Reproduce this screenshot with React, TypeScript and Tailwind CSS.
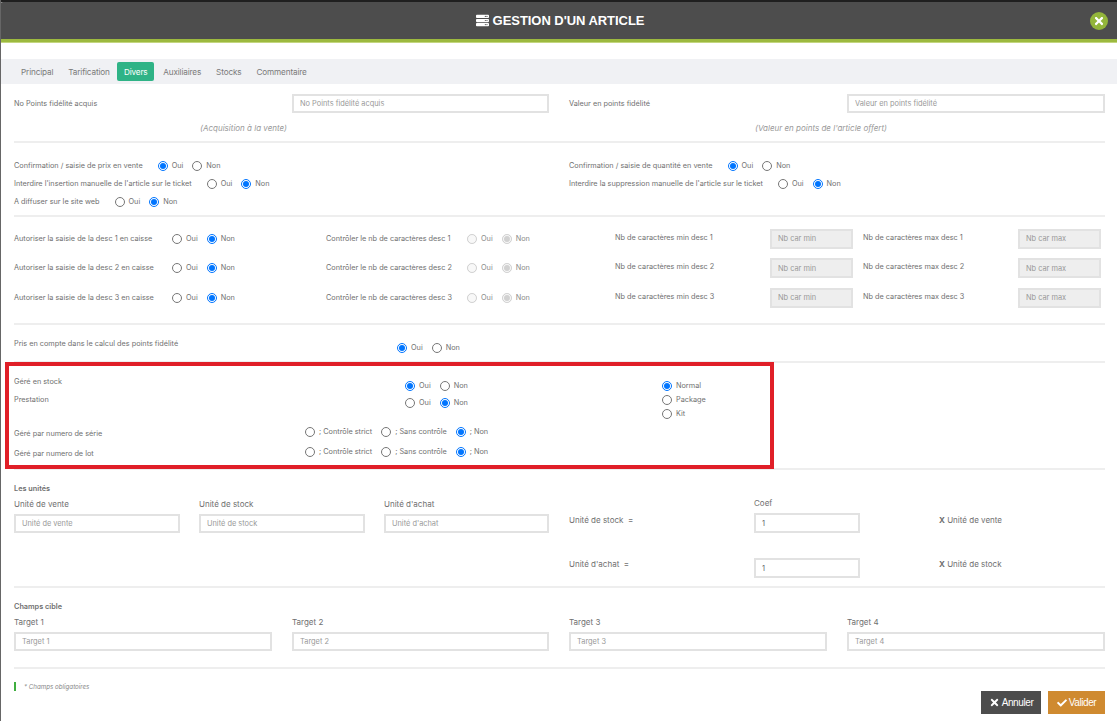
import React from "react";
import { FaServer, FaTimes, FaCheck } from "react-icons/fa";

const Radio = ({ on, off, label }: { on?: boolean; off?: boolean; label: string }) => (
  <label className={`flex items-center mr-[9px] ${off ? "text-[#8a8a8a]" : ""}`}>
    <input type="radio" readOnly checked={!!on} disabled={!!off} className="w-[10px] h-[10px] m-0 shrink-0" />
    <span className="ml-[4px] whitespace-nowrap">{label}</span>
  </label>
);

const OuiNon = ({ oui, off }: { oui?: boolean; off?: boolean }) => (
  <div className="flex items-center">
    <Radio on={oui} off={off} label="Oui" />
    <Radio on={!oui} off={off} label="Non" />
  </div>
);

const Field = ({ ph, w, value, off, h = "h-[19px]" }: { ph?: string; w: string; value?: string; off?: boolean; h?: string }) => (
  <input
    readOnly
    placeholder={ph}
    value={value ?? ""}
    disabled={off}
    className={`${w} ${h} shrink-0 border-2 border-[#e2e2e2] pl-[6px] text-[7.4px] text-[#666] outline-none placeholder:text-[#999] ${off ? "bg-[#eeeeee]" : "bg-white"}`}
  />
);

const Line = ({ label, oui }: { label: string; oui?: boolean }) => (
  <div className="flex items-center h-[18px]">
    <span className="pr-[15px] whitespace-nowrap">{label}</span>
    <OuiNon oui={oui} />
  </div>
);

const DescRow = ({ n }: { n: number }) => (
  <div className="flex items-center h-[29.5px]">
    <div className="w-[158px] whitespace-nowrap">Autoriser la saisie de la desc {n} en caisse</div>
    <div className="w-[154px]"><OuiNon /></div>
    <div className="w-[141px] whitespace-nowrap">Contrôler le nb de caractères desc {n}</div>
    <div className="w-[148px]"><OuiNon off /></div>
    <div className="w-[155px] whitespace-nowrap pb-[2px]">Nb de caractères min desc {n}</div>
    <Field ph="Nb car min" w="w-[83px]" off h="h-[20px]" />
    <div className="w-[165px] pl-[10px] whitespace-nowrap pb-[2px]">Nb de caractères max desc {n}</div>
    <Field ph="Nb car max" w="w-[83px]" off h="h-[20px]" />
  </div>
);

const TrackRow = ({ label }: { label: string }) => (
  <div className="flex items-start h-[20px]">
    <div className="w-[291px] pt-[2px] whitespace-nowrap">{label}</div>
    <div className="flex items-center">
      <Radio label="; Contrôle strict" />
      <Radio label="; Sans contrôle" />
      <Radio on label="; Non" />
    </div>
  </div>
);

const Labeled = ({ label, w }: { label: string; w: string }) => (
  <div className={w}>
    <div className="h-[10px] mb-[5px] whitespace-nowrap">{label}</div>
    <Field ph={label} w="w-full" />
  </div>
);

export default function App() {
  const tabs = ["Principal", "Tarification", "Divers", "Auxiliaires", "Stocks", "Commentaire"];
  return (
    <div className="relative w-[1117px] h-[721px] overflow-hidden bg-white border-l border-[#666] text-[7.3px] leading-[10px] text-[#707070] font-['Inter','Liberation_Sans',sans-serif]">
      <div className="h-[2px] bg-[#1f1f1f] -ml-px" />
      <header className="-ml-px h-[37px] bg-[#4d4d4d] rounded-tl-[3px] flex items-center justify-center relative">
        <div className="flex items-center gap-[4px] text-white font-['Liberation_Sans',sans-serif] font-bold text-[13px] tracking-[-0.05px] pl-[3px]">
          <FaServer className="w-[13px] h-[13px]" />
          <span>GESTION D'UN ARTICLE</span>
        </div>
        <span className="absolute right-[9px] top-[10px] w-[18px] h-[18px] rounded-full bg-[#93b53b] flex items-center justify-center text-white">
          <FaTimes className="w-[12px] h-[12px]" />
        </span>
      </header>
      <div className="-ml-px h-[3px] bg-[#9cb93f] border-b border-[#c3d67f] box-content" />

      <nav className="mt-[16px] h-[25px] bg-[#f0f1f4] -ml-px pl-[13.5px] flex items-center text-[8.2px] tracking-[-0.15px] text-[#7a7a7a]">
        {tabs.map((t) =>
          t === "Divers" ? (
            <span key={t} className="h-[19px] w-[37px] justify-center mr-[1.5px] flex items-center rounded-[2px] bg-[#2fb386] text-white">{t}</span>
          ) : (
            <span key={t} className="px-[7.5px]">{t}</span>
          )
        )}
      </nav>

      <main className="pl-[13px] pr-[12px]">
        {/* points fidélité */}
        <section className="h-[59px] pt-[10px] border-b-2 border-[#eeeeee] flex gap-[20px]">
          <div className="w-[535px]">
            <div className="flex items-center">
              <span className="w-[278px] pt-[1px]">No Points fidélité acquis</span>
              <Field ph="No Points fidélité acquis" w="w-[257px]" />
            </div>
            <div className="pl-[186px] pt-[10px] italic text-[#9a9a9a] text-[8px]">(Acquisition à la vente)</div>
          </div>
          <div className="w-[536px]">
            <div className="flex items-center">
              <span className="w-[278px] pt-[1px]">Valeur en points fidélité</span>
              <Field ph="Valeur en points fidélité" w="w-[258px]" />
            </div>
            <div className="pl-[186px] pt-[10px] italic text-[#9a9a9a] text-[8px]">(Valeur en points de l'article offert)</div>
          </div>
        </section>

        {/* confirmations */}
        <section className="h-[74px] pt-[14px] border-b-2 border-[#eeeeee] flex gap-[20px]">
          <div className="w-[535px]">
            <Line label="Confirmation / saisie de prix en vente" oui />
            <Line label="Interdire l'insertion manuelle de l'article sur le ticket" />
            <Line label="A diffuser sur le site web" />
          </div>
          <div className="w-[536px]">
            <Line label="Confirmation / saisie de quantité en vente" oui />
            <Line label="Interdire la suppression manuelle de l'article sur le ticket" />
          </div>
        </section>

        {/* descriptions */}
        <section className="h-[108px] pt-[7px] border-b-2 border-[#eeeeee]">
          <DescRow n={1} />
          <DescRow n={2} />
          <DescRow n={3} />
        </section>

        {/* points */}
        <section className="h-[38px] pt-[14px] border-b-2 border-[#eeeeee] flex items-start">
          <div className="w-[383px]">Pris en compte dans le calcul des points fidélité</div>
          <div className="pt-[4px]"><OuiNon oui /></div>
        </section>

        {/* stock */}
        <section className="h-[107px] pt-[14px] border-b-2 border-[#eeeeee] flex items-start">
          <div className="w-[648px]">
            <div className="flex items-start h-[18px]">
              <div className="w-[391px]">Géré en stock</div>
              <div className="pt-[4px]"><OuiNon oui /></div>
            </div>
            <div className="flex items-start h-[32px]">
              <div className="w-[391px]">Prestation</div>
              <div className="pt-[3px]"><OuiNon /></div>
            </div>
            <TrackRow label="Géré par numero de série" />
            <TrackRow label="Géré par numero de lot" />
          </div>
          <div className="pt-[4px]">
            <div className="h-[14px]"><Radio on label="Normal" /></div>
            <div className="h-[14px]"><Radio label="Package" /></div>
            <div className="h-[14px]"><Radio label="Kit" /></div>
          </div>
        </section>

        {/* unités */}
        <section className="h-[118px] pt-[14px] border-b-2 border-[#eeeeee] flex gap-[20px]">
          <div className="w-[535px]">
            <div className="h-[10px] mb-[5px] font-semibold">Les unités</div>
            <div className="flex gap-[19px] text-[8px]">
              <Labeled label="Unité de vente" w="w-[166px]" />
              <Labeled label="Unité de stock" w="w-[166px]" />
              <Labeled label="Unité d'achat" w="w-[165px]" />
            </div>
          </div>
          <div className="w-[536px] text-[8px] pt-[14px]">
            <div className="flex items-start h-[60px]">
              <div className="w-[185px] pt-[17px]">Unité de stock&nbsp; =</div>
              <div className="w-[185px]">
                <div className="h-[10px] mb-[5px]">Coef</div>
                <Field value="1" w="w-[106px]" h="h-[20px]" />
              </div>
              <div className="pt-[17px]"><b className="font-bold">X</b> Unité de vente</div>
            </div>
            <div className="flex items-start">
              <div className="w-[185px] pt-[1px]">Unité d'achat&nbsp; =</div>
              <div className="w-[185px]"><Field value="1" w="w-[106px]" h="h-[20px]" /></div>
              <div className="pt-[1px]"><b className="font-bold">X</b> Unité de stock</div>
            </div>
          </div>
        </section>

        {/* cibles */}
        <section className="h-[81px] pt-[14px] border-b-2 border-[#eeeeee]">
          <div className="h-[10px] mb-[5px] font-semibold">Champs cible</div>
          <div className="flex gap-[20px] text-[8px]">
            <Labeled label="Target 1" w="w-[258px]" />
            <Labeled label="Target 2" w="w-[257px]" />
            <Labeled label="Target 3" w="w-[258px]" />
            <Labeled label="Target 4" w="w-[258px]" />
          </div>
        </section>

        {/* pied */}
        <footer className="flex items-start justify-between pt-[13px]">
          <div className="flex items-center h-[9px]">
            <span className="w-[2px] h-[9px] bg-[#3fae3f]" />
            <span className="ml-[8px] italic text-[6.2px] text-[#888]">* Champs obligatoires</span>
          </div>
          <div className="flex gap-[7px] pt-[9px] text-[10px] tracking-[-0.4px] text-white font-['Liberation_Sans',sans-serif]">
            <button className="w-[60px] h-[23px] bg-[#4d4d4d] flex items-center justify-center gap-[2px]">
              <FaTimes className="w-[11px] h-[11px]" /> Annuler
            </button>
            <button className="w-[57px] h-[23px] bg-[#cf8a30] flex items-center justify-center gap-[2px]">
              <FaCheck className="w-[10px] h-[10px]" /> Valider
            </button>
          </div>
        </footer>
      </main>

      <div className="absolute left-[4px] top-[362px] w-[769px] h-[107px] border-[4px] border-[#e01f28]" />
    </div>
  );
}
